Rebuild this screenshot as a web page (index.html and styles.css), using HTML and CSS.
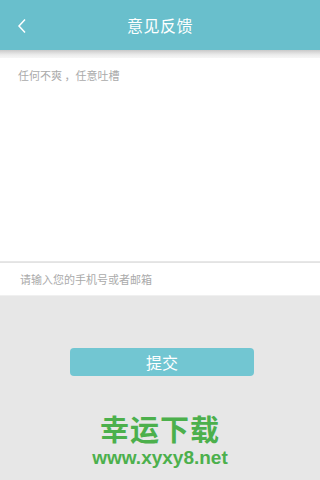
FILE: index.html
```html
<!DOCTYPE html>
<html>
<head>
<meta charset="utf-8">
<link rel="stylesheet" href="styles.css">
</head>
<body>
<div class="app">
  <header class="topbar">
    <svg class="back" width="12" height="16" viewBox="0 0 12 16"><path d="M9 1.5 L3 8 L9 14.5" fill="none" stroke="#ffffff" stroke-width="1.5"/></svg>
    <h1 class="title">意见反馈</h1>
  </header>
  <div class="shadow"></div>
  <div class="feedback">
    <p class="placeholder">任何不爽 ，任意吐槽</p>
  </div>
  <div class="contact">
    <span class="placeholder">请输入您的手机号或者邮箱</span>
  </div>
  <div class="actions">
    <button class="submit">提交</button>
  </div>
  <div class="watermark">
    <div class="wm-cn">幸运下载</div>
    <div class="wm-url">www.xyxy8.net</div>
  </div>
</div>
</body>
</html>
```
FILE: styles.css
```css
* { box-sizing: border-box; }
html, body { margin: 0; padding: 0; }
body {
  width: 320px;
  height: 480px;
  overflow: hidden;
  background: #e7e7e7;
  font-family: "Noto Sans CJK SC", "Liberation Sans", sans-serif;
}
.app { display: flex; flex-direction: column; height: 480px; }
.topbar {
  height: 50px;
  background: #69bfcc;
  display: flex;
  align-items: center;
  justify-content: center;
  position: relative;
}
.back { position: absolute; left: 16px; top: 18px; }
.title {
  margin: 0;
  color: #ffffff;
  font-size: 16px;
  font-weight: normal;
  letter-spacing: 0.5px;
}
.shadow {
  height: 8px;
  background: linear-gradient(#c9c9c9, #ececec 60%, #f6f6f6);
}
.feedback {
  background: #ffffff;
  height: 203px;
  padding: 9px 18px;
}
.placeholder {
  margin: 0;
  color: #aaaaaa;
  font-size: 11px;
}
.contact {
  background: #ffffff;
  height: 34px;
  border-top: 1px solid #e3e3e3;
  border-bottom: 1px solid #f0f0f0;
  margin-top: 1px;
  display: flex;
  align-items: center;
  padding-left: 20px;
}
.actions {
  display: flex;
  justify-content: center;
  padding-top: 52px;
  padding-left: 4px;
}
.submit {
  width: 184px;
  height: 28px;
  border: none;
  border-radius: 4px;
  background: #72c6d2;
  color: #ffffff;
  font-family: "Noto Sans CJK SC", sans-serif;
  font-size: 16px;
  line-height: 28px;
  padding: 0;
}
.watermark {
  display: flex;
  flex-direction: column;
  align-items: center;
  padding-top: 36px;
  gap: 4px;
  font-weight: bold;
}
.wm-cn {
  font-size: 29px;
  line-height: 32px;
  letter-spacing: 1px;
  color: #4cb04c;
}
.wm-url {
  font-family: "Liberation Sans", sans-serif;
  font-size: 19px;
  line-height: 20px;
  color: #4cb04c;
}
```
